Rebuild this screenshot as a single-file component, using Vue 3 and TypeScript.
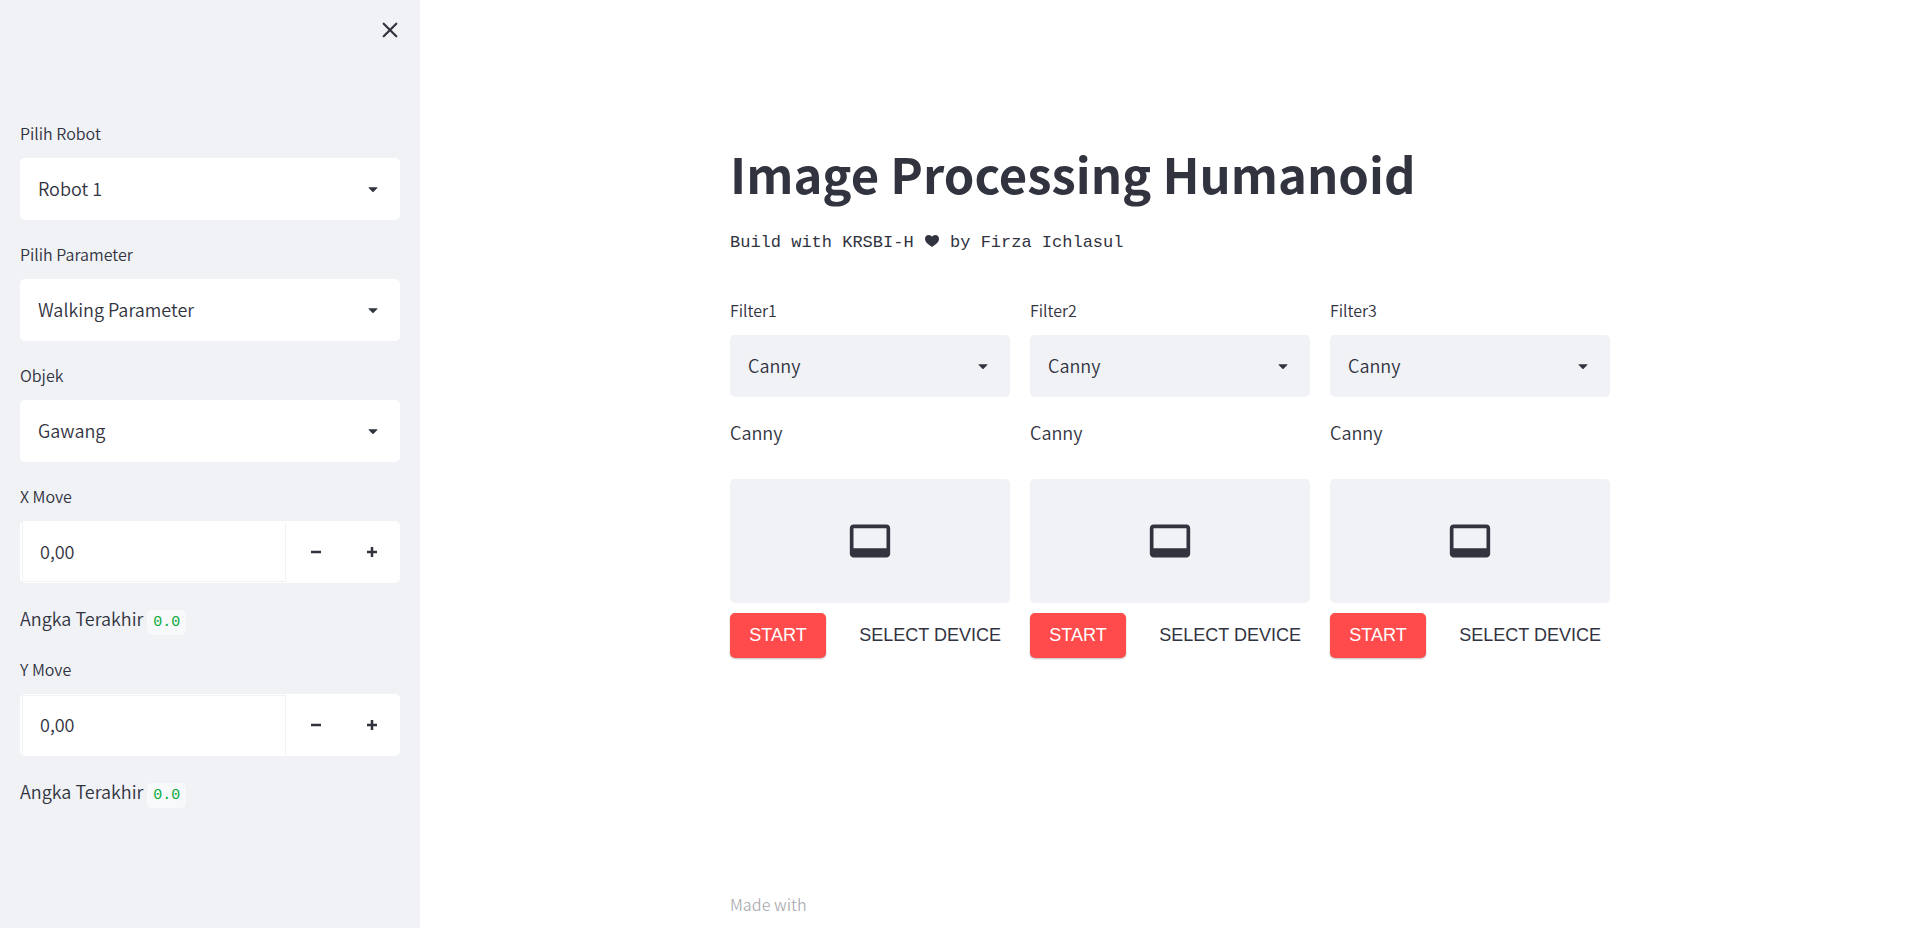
<script setup lang="ts">
import { ref } from 'vue'

interface SelectField {
  id: string
  label: string
  value: string
  options: string[]
}

interface NumberField {
  id: string
  label: string
  value: string
  last: string
}

const sidebarSelects = ref<SelectField[]>([
  { id: 'robot', label: 'Pilih Robot', value: 'Robot 1', options: ['Robot 1'] },
  { id: 'parameter', label: 'Pilih Parameter', value: 'Walking Parameter', options: ['Walking Parameter'] },
  { id: 'objek', label: 'Objek', value: 'Gawang', options: ['Gawang'] },
])

const moves = ref<NumberField[]>([
  { id: 'x-move', label: 'X Move', value: '0,00', last: '0.0' },
  { id: 'y-move', label: 'Y Move', value: '0,00', last: '0.0' },
])

const filters = ref<SelectField[]>(
  [1, 2, 3].map((n) => ({ id: `filter${n}`, label: `Filter${n}`, value: 'Canny', options: ['Canny'] })),
)

function step(field: NumberField, delta: number): void {
  const next = Number(field.value.replace(',', '.')) + delta
  field.value = next.toFixed(2).replace('.', ',')
}
</script>

<template>
  <div class="app">
    <aside class="sidebar">
      <header class="sidebar-top">
        <button class="close" type="button" aria-label="Close sidebar">
          <svg viewBox="0 0 16 16" width="16" height="16" aria-hidden="true">
            <path d="M1.7 1.7L14.3 14.3M14.3 1.7L1.7 14.3" fill="none" stroke="currentColor" stroke-width="2.2" stroke-linecap="round" />
          </svg>
        </button>
      </header>

      <div class="fields">
        <div v-for="field in sidebarSelects" :key="field.id">
          <label class="label" :for="field.id">{{ field.label }}</label>
          <div class="select">
            <select :id="field.id" v-model="field.value">
              <option v-for="option in field.options" :key="option">{{ option }}</option>
            </select>
            <svg class="arrow" viewBox="0 0 24 24" aria-hidden="true">
              <path d="M12.7071 15.2929L17.1464 10.8536C17.4614 10.5386 17.2383 10 16.7929 10L7.20711 10C6.76165 10 6.53857 10.5386 6.85355 10.8536L11.2929 15.2929C11.6834 15.6834 12.3166 15.6834 12.7071 15.2929Z" />
            </svg>
          </div>
        </div>

        <template v-for="field in moves" :key="field.id">
          <div>
            <label class="label" :for="field.id">{{ field.label }}</label>
            <div class="number" :class="field.id">
              <input :id="field.id" v-model="field.value" type="text" inputmode="decimal" />
              <button type="button" :aria-label="`Decrease ${field.label}`" @click="step(field, -0.01)">
                <svg viewBox="0 0 8 8" width="10" height="10" aria-hidden="true"><path d="M0 3v2h8V3z" /></svg>
              </button>
              <button type="button" :aria-label="`Increase ${field.label}`" @click="step(field, 0.01)">
                <svg viewBox="0 0 8 8" width="10" height="10" aria-hidden="true"><path d="M3 0v3H0v2h3v3h2V5h3V3H5V0z" /></svg>
              </button>
            </div>
          </div>
          <p class="text">Angka Terakhir <code>{{ field.last }}</code></p>
        </template>
      </div>
    </aside>

    <main class="main">
      <div class="content">
        <h1>Image Processing Humanoid</h1>
        <p class="credit">
          Build with KRSBI-H
          <svg class="heart" viewBox="0 0 14 12" role="img" aria-label="love">
            <path d="M7 12C5.6 10.4 0 8.2 0 3.9 0 1.6 1.6 0 3.7 0 5.1 0 6.3.7 7 1.8 7.7.7 8.9 0 10.3 0 12.4 0 14 1.6 14 3.9 14 8.2 8.4 10.4 7 12Z" />
          </svg>
          by Firza Ichlasul
        </p>

        <div class="columns">
          <section v-for="field in filters" :key="field.id" class="column">
            <div>
              <label class="label" :for="field.id">{{ field.label }}</label>
              <div class="select tinted">
                <select :id="field.id" v-model="field.value">
                  <option v-for="option in field.options" :key="option">{{ option }}</option>
                </select>
                <svg class="arrow" viewBox="0 0 24 24" aria-hidden="true">
                  <path d="M12.7071 15.2929L17.1464 10.8536C17.4614 10.5386 17.2383 10 16.7929 10L7.20711 10C6.76165 10 6.53857 10.5386 6.85355 10.8536L11.2929 15.2929C11.6834 15.6834 12.3166 15.6834 12.7071 15.2929Z" />
                </svg>
              </div>
            </div>
            <p class="text">{{ field.value }}</p>
            <div class="stream">
              <div class="preview">
                <svg viewBox="0 0 24 24" width="44" height="44" aria-hidden="true">
                  <path d="M21 3H3c-1.1 0-2 .9-2 2v14c0 1.1.9 2 2 2h18c1.1 0 2-.9 2-2V5c0-1.1-.9-2-2-2zm0 13H3V5h18v11z" />
                </svg>
              </div>
              <div class="actions">
                <button class="start" type="button">START</button>
                <button class="device" type="button">SELECT DEVICE</button>
              </div>
            </div>
          </section>
        </div>
      </div>
      <footer class="footer">Made with</footer>
    </main>
  </div>
</template>

<style>
body {
  margin: 0;
}
</style>

<style scoped>
.app {
  display: flex;
  min-height: 100vh;
  background: #fff;
  color: #31333f;
  font-family: "Noto Sans CJK SC", "Noto Sans", sans-serif;
  font-size: 18px;
  font-weight: 350;
  line-height: 32px;
}

.app * {
  box-sizing: border-box;
}

button,
select,
input {
  margin: 0;
  border: 0;
  padding: 0;
  background: transparent;
  color: inherit;
  font: inherit;
}

button {
  cursor: pointer;
}

svg {
  display: block;
  fill: currentColor;
}

p {
  margin: 0;
}

.sidebar {
  flex: 0 0 420px;
  padding: 0 20px;
  background: #f0f2f6;
}

.sidebar-top {
  display: flex;
  justify-content: flex-end;
  padding-top: 20px;
}

.close {
  display: grid;
  place-items: center;
  width: 20px;
  height: 20px;
}

.fields {
  display: flex;
  flex-direction: column;
  gap: 20px;
  padding-top: 79px;
}

.label {
  display: block;
  margin-bottom: 10px;
  font-size: 16px;
  line-height: 29px;
}

.select {
  display: grid;
  align-items: center;
  border-radius: 5px;
  background: #fff;
}

.select.tinted {
  background: #f0f2f6;
}

.select select,
.arrow {
  grid-area: 1 / 1;
}

.select select {
  width: 100%;
  height: 62px;
  padding: 0 50px 2px 18px;
  appearance: none;
}

.arrow {
  justify-self: end;
  width: 20px;
  height: 20px;
  margin-right: 17px;
  pointer-events: none;
}

.number {
  display: flex;
  padding: 1px 0 1px 2px;
  border-radius: 5px;
  background: #fff;
}

.number input {
  flex: 1;
  min-width: 0;
  height: 60px;
  padding: 0 17px 2px;
  border: 1px solid #f0f2f6;
}

.number.x-move input {
  border-top-color: transparent;
}

.number.y-move input {
  border-bottom-color: transparent;
}

.number button {
  display: grid;
  place-items: center;
  width: 56px;
}

.number button:first-of-type {
  margin-left: 2px;
}

.text {
  padding-bottom: 2px;
  line-height: 30px;
}

code {
  padding: 4px 6px;
  border-radius: 5px;
  background: #f8f9fb;
  color: #09ab3b;
  font-family: "Liberation Mono", monospace;
  font-size: 15px;
  line-height: 16px;
}

.main {
  display: flex;
  flex: 1;
  flex-direction: column;
  align-items: center;
  padding: 0 20px;
}

.content,
.footer {
  width: 100%;
  max-width: 880px;
}

.content {
  flex: 1;
  padding-top: 137px;
}

h1 {
  margin: 0;
  font-size: 49px;
  font-weight: 700;
  line-height: 72px;
}

.credit {
  margin: 18px 0 37px;
  font-family: "Liberation Mono", monospace;
  font-size: 17px;
}

.heart {
  display: inline-block;
  width: 14px;
  height: 12px;
  margin: 0 1px;
  vertical-align: baseline;
}

.columns {
  display: grid;
  grid-template-columns: repeat(3, 1fr);
  gap: 20px;
}

.column {
  display: flex;
  flex-direction: column;
  gap: 20px;
}

.stream {
  padding-top: 10px;
}

.preview {
  display: grid;
  place-items: center;
  height: 124px;
  border-radius: 5px;
  background: #f0f2f6;
}

.actions {
  display: flex;
  justify-content: space-between;
  margin-top: 10px;
  font-family: "Liberation Sans", Arial, sans-serif;
  font-size: 18px;
  line-height: 45px;
}

.start {
  width: 96px;
  border-radius: 5px;
  background: #ff4b4b;
  color: #fff;
  box-shadow: 0 1px 2px rgba(0, 0, 0, 0.25);
}

.device {
  padding: 0 9px;
}

.footer {
  padding-bottom: 8px;
  color: rgba(49, 51, 63, 0.4);
  font-size: 16px;
}
</style>
